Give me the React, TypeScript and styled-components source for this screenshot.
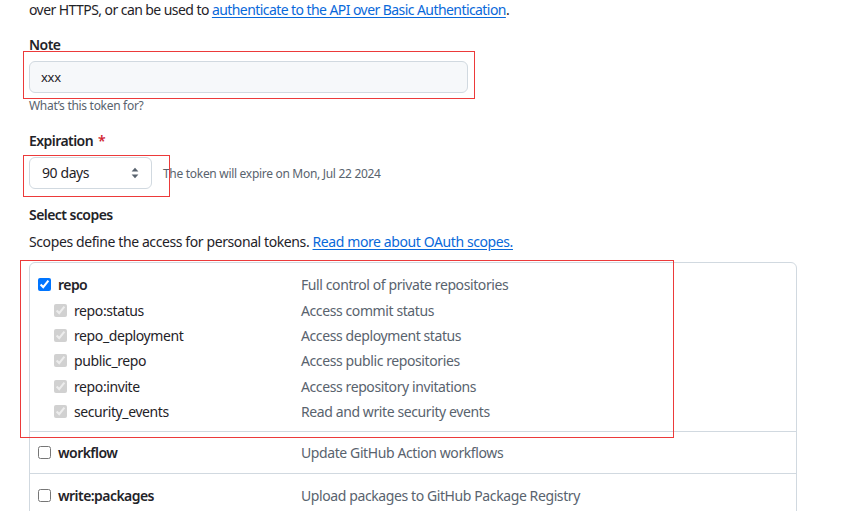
import React from "react";
import styled, { createGlobalStyle } from "styled-components";

const Global = createGlobalStyle`
  html, body { margin: 0; padding: 0; background: #ffffff; }
  body {
    font-family: "Noto Sans", "Liberation Sans", sans-serif;
    font-size: 14px;
    letter-spacing: -0.4px;
    color: #1f2328;
  }
  * { box-sizing: border-box; }
`;

const Page = styled.div`
  position: relative;
  width: 843px;
  height: 511px;
  overflow: hidden;
  padding-left: 29px;
`;

const Intro = styled.p`
  margin: 0;
  line-height: 20px;
  font-size: 14px;
  letter-spacing: -0.57px;
`;

const Link = styled.a`
  color: #0969da;
  text-decoration: underline;
  text-underline-offset: 2px;
`;

const Field = styled.div<{ $top: number }>`
  margin-top: ${(p) => p.$top}px;
  display: flex;
  flex-direction: column;
`;

const Label = styled.div`
  font-weight: 600;
  font-size: 14px;
  line-height: 20px;
  letter-spacing: -0.55px;
`;

const Required = styled.span`
  color: #d1242f;
  margin-left: 5px;
`;

const TextInput = styled.input`
  margin-top: 6px;
  width: 439px;
  height: 32px;
  padding: 0 11px;
  border: 1px solid #d1d9e0;
  border-radius: 6px;
  background: #f6f8fa;
  font-family: inherit;
  font-size: 13px;
  letter-spacing: -0.3px;
  color: #1f2328;
  outline: none;
`;

const Note = styled.div`
  margin-top: 4px;
  font-size: 12px;
  line-height: 18px;
  letter-spacing: -0.3px;
  color: #59636e;
`;

const SelectRow = styled.div`
  margin-top: 6px;
  display: flex;
  align-items: center;
  gap: 11px;
`;

const SelectBox = styled.div`
  width: 123px;
  height: 32px;
  display: flex;
  align-items: center;
  justify-content: space-between;
  padding: 0 12px 1px 12px;
  border: 1px solid #d1d9e0;
  border-radius: 6px;
  background: #ffffff;
  font-size: 14px;
  color: #1f2328;
`;

const Hint = styled.span`
  font-size: 12px;
  letter-spacing: -0.3px;
  color: #59636e;
`;

const Para = styled.p`
  margin: 7px 0 0;
  line-height: 20px;
`;

const ScopeBox = styled.div`
  margin-top: 10px;
  width: 768px;
  border: 1px solid #d1d9e0;
  border-radius: 6px;
`;

const Group = styled.div<{ $padTop: number; $padBottom: number; $last?: boolean }>`
  padding: ${(p) => p.$padTop}px 8px ${(p) => p.$padBottom}px 8px;
  border-bottom: ${(p) => (p.$last ? "none" : "1px solid #d1d9e0")};
`;

const Row = styled.div<{ $h: number }>`
  display: grid;
  grid-template-columns: 263px 1fr;
  align-items: center;
  height: ${(p) => p.$h}px;
`;

const NameCell = styled.label<{ $sub?: boolean }>`
  display: flex;
  align-items: center;
  gap: 7px;
  padding-left: ${(p) => (p.$sub ? 16 : 0)}px;
  font-weight: ${(p) => (p.$sub ? 400 : 600)};
  letter-spacing: ${(p) => (p.$sub ? "-0.4px" : "-0.55px")};
  color: #1f2328;
`;

const Check = styled.input`
  margin: 0;
  width: 13px;
  height: 13px;
`;

const Desc = styled.span`
  color: #59636e;
`;

const Annotation = styled.div<{ $l: number; $t: number; $w: number; $h: number }>`
  position: absolute;
  left: ${(p) => p.$l}px;
  top: ${(p) => p.$t}px;
  width: ${(p) => p.$w}px;
  height: ${(p) => p.$h}px;
  border: 1px solid #ec3a3a;
  pointer-events: none;
`;

const SortIcon = () => (
  <svg width="8" height="12" viewBox="0 0 8 12" aria-hidden="true">
    <path d="M4 0.8 L7.4 4.6 H0.6 Z" fill="#59636e" />
    <path d="M4 11.2 L7.4 7.4 H0.6 Z" fill="#59636e" />
  </svg>
);

const subs: [string, string][] = [
  ["repo:status", "Access commit status"],
  ["repo_deployment", "Access deployment status"],
  ["public_repo", "Access public repositories"],
  ["repo:invite", "Access repository invitations"],
  ["security_events", "Read and write security events"],
];

export default function App() {
  return (
    <Page>
      <Global />
      <Intro>
        over HTTPS, or can be used to{" "}
        <Link href="#">authenticate to the API over Basic Authentication</Link>.
      </Intro>

      <Field $top={15}>
        <Label>Note</Label>
        <TextInput defaultValue="xxx" />
        <Note>What’s this token for?</Note>
      </Field>

      <Field $top={16}>
        <Label>
          Expiration<Required>*</Required>
        </Label>
        <SelectRow>
          <SelectBox>
            <span>90 days</span>
            <SortIcon />
          </SelectBox>
          <Hint>The token will expire on Mon, Jul 22 2024</Hint>
        </SelectRow>
      </Field>

      <Field $top={16}>
        <Label>Select scopes</Label>
        <Para>
          Scopes define the access for personal tokens.{" "}
          <Link href="#">Read more about OAuth scopes.</Link>
        </Para>
      </Field>

      <ScopeBox>
        <Group $padTop={9} $padBottom={7}>
          <Row $h={25.4}>
            <NameCell>
              <Check type="checkbox" defaultChecked />
              repo
            </NameCell>
            <Desc>Full control of private repositories</Desc>
          </Row>
          {subs.map(([n, d]) => (
            <Row $h={25.4} key={n}>
              <NameCell $sub>
                <Check type="checkbox" checked disabled readOnly />
                {n}
              </NameCell>
              <Desc>{d}</Desc>
            </Row>
          ))}
        </Group>
        <Group $padTop={0} $padBottom={0}>
          <Row $h={41}>
            <NameCell>
              <Check type="checkbox" />
              workflow
            </NameCell>
            <Desc>Update GitHub Action workflows</Desc>
          </Row>
        </Group>
        <Group $padTop={0} $padBottom={0} $last>
          <Row $h={42}>
            <NameCell>
              <Check type="checkbox" />
              write:packages
            </NameCell>
            <Desc>Upload packages to GitHub Package Registry</Desc>
          </Row>
        </Group>
      </ScopeBox>

      <Annotation $l={23} $t={51} $w={452} $h={48} />
      <Annotation $l={23} $t={155} $w={147} $h={42} />
      <Annotation $l={20} $t={260} $w={654} $h={178} />
    </Page>
  );
}
